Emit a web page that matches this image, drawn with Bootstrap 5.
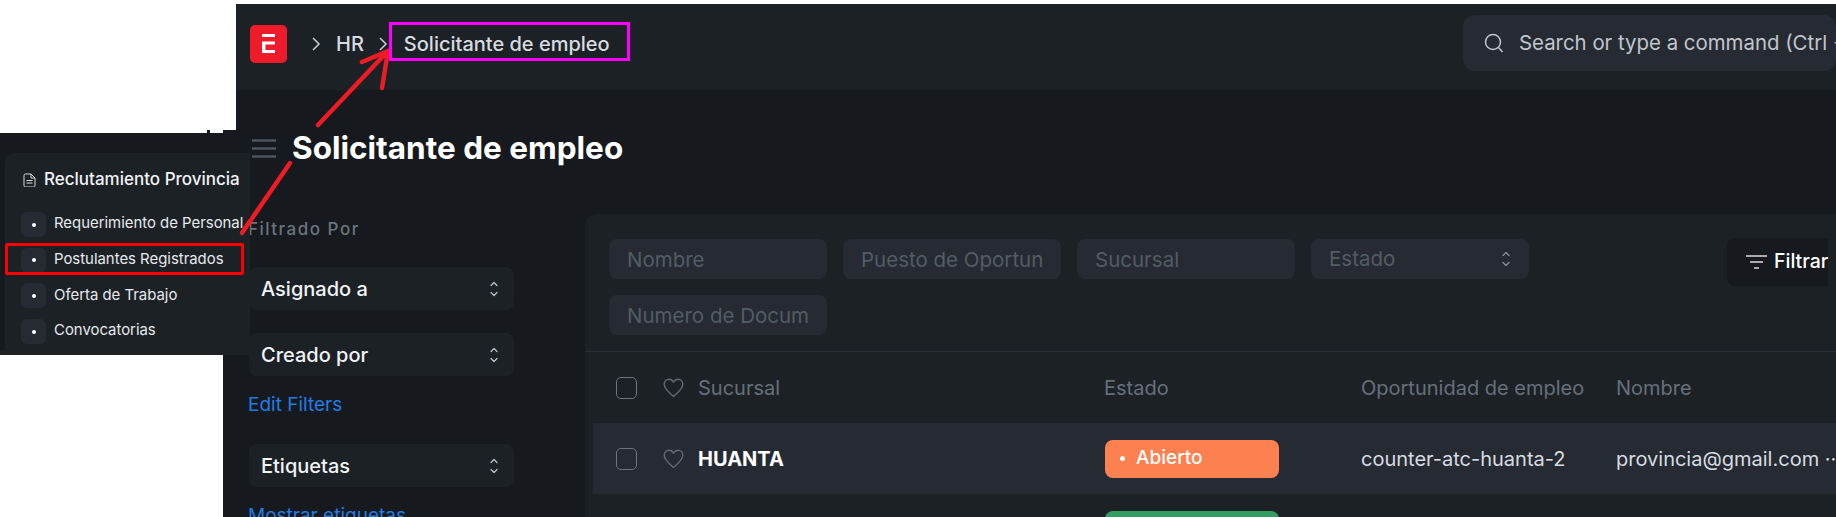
<!DOCTYPE html>
<html lang="en">
<head>
<meta charset="UTF-8">
<title>Solicitante de empleo</title>
<link href="https://cdn.jsdelivr.net/npm/bootstrap@5.3.0/dist/css/bootstrap.min.css" rel="stylesheet">
<style>
    html, body { height: 100%; }
    body {
        background: #fff;
        font-family: Inter, "Liberation Sans", sans-serif;
        overflow: hidden;
    }
    /* main screenshot */
    .app-window {
        position: absolute;
        left: 223px; top: 4px; right: 0; bottom: 0;
        background: #16191d;
        color: #fff;
        overflow: hidden;
        clip-path: polygon(13px 0, 100% 0, 100% 100%, 0 100%, 0 126px, 13px 126px);
    }
    .app-header { height: 86px; background: #1c2126; padding: 0 0 6px 27px; }
    .app-logo { width: 37px; height: 38px; flex: none; }
    .crumb { font-size: 20px; font-weight: 500; color: #d8dce0; line-height: 24px; }
    .crumb-first { margin-left: 24px; }
    .crumb-hr { margin: 0 14px 0 15px; }
    .crumb-current { margin-left: 16px; }
    .app-search {
        width: 373px; height: 56px; margin-top: -2px; flex: none;
        background: #252a33; border-radius: 12px;
        padding-left: 21px; gap: 15px;
        font-size: 20.4px; color: #c0c6cc; white-space: nowrap; overflow: hidden;
    }
    .app-title-row { height: 116px; padding-left: 29px; gap: 16px; }
    .app-title { font-size: 31.5px; font-weight: 700; margin: 0; line-height: 44px; }
    .app-body { gap: 71px; padding-left: 26px; }
    .filter-side { width: 265px; flex: none; }
    .filter-head { font-size: 17px; font-weight: 500; color: #6b747d; letter-spacing: 1.5px; line-height: 24px; margin: 11px 0 26px -1px; }
    .side-select {
        height: 43px; background: #1c2126; border-radius: 8px;
        padding: 0 15px 0 12px; font-size: 20px; font-weight: 500; color: #f1f3f5;
    }
    .side-select svg { color: #c0c6cc; }
    .filter-select svg { color: #8a929a; }
    .side-link { font-size: 19px; color: #1f7de6; line-height: 24px; text-decoration: none; display: block; margin-left: -1px; }
    .gap-a { margin-top: 23px; }
    .gap-b { margin-top: 17px; }
    .gap-c { margin-top: 27px; }
    .list-card { flex: 1; background: #1c2126; border-radius: 12px 0 0 0; min-width: 0; height: 320px; margin-top: 8px; }
    .filter-row { padding: 25px 0 0 24px; border-bottom: 1px solid #2a2f35; height: 138px; align-items: flex-start; }
    .filter-wrap { width: 940px; flex: none; gap: 16px; }
    .filter-input.form-control {
        width: 218px; height: 40px; flex: none;
        background-color: #252a33; border: 0; border-radius: 8px;
        padding: 0 18px; font-size: 20.5px; color: #535c65; box-shadow: none;
    }
    .filter-input::placeholder { color: #535c65; opacity: 1; }
    .filter-input.filter-select { padding-right: 18px; }
    .filter-btn {
        height: 48px; margin-left: 178px; margin-top: -1px; flex: none;
        background: #16191d; color: #fff; border: 0; border-radius: 8px 0 0 8px;
        padding: 0 0 0 19px; gap: 7px; font-size: 19.5px; font-weight: 500;
    }
    .list-grid {
        display: grid;
        grid-template-columns: 511px 257px 255px 1fr;
        align-items: center;
        margin-left: 8px;
        height: 71px;
    }
    .list-head { color: #66707a; font-size: 20px; }
    .list-item { background: #252a33; color: #d8dce0; font-size: 20px; white-space: nowrap; overflow: hidden; }
    .first-cell { padding-left: 23px; gap: 26px; }
    .check-box { width: 21px; height: 22px; border: 1.5px solid #6b747d; border-radius: 5px; flex: none; }
    .first-name { margin-left: -12px; }
    .item-name { font-weight: 700; color: #fff; }
    .state-pill {
        width: 174px; height: 38px; border-radius: 8px; margin-left: 1px;
        font-size: 19px; font-weight: 500; color: #fff; padding-left: 15px; gap: 11px;
    }
    .pill-open { background: #fd8050; }
    .pill-ok { background: #2f9e5f; }
    .pill-dot { width: 5px; height: 5px; border-radius: 50%; background: #fff; flex: none; }
    .next-row { align-self: start; padding-top: 17px; }
    /* pasted menu panel */
    .menu-shot {
        position: absolute; left: 0; top: 133px; width: 250px; height: 222px;
        background: linear-gradient(#16191d 217px, #1c2126 217px);
        padding: 20px 0 5px 5px; color: #f1f3f5;
    }
    .menu-card { height: 100%; background: #1c2126; border-radius: 10px 0 0 0; padding: 20px 0 0 18px; }
    .menu-title { font-size: 17px; font-weight: 500; gap: 8px; height: 13px; margin-bottom: 26px; white-space: nowrap; }
    .menu-item { height: 25px; gap: 8px; margin-bottom: 10.7px; font-size: 14.9px; white-space: nowrap; color: #e6e9ec; margin-left: -2px; }
    .menu-item span:last-child { margin-top: -2px; }
    .menu-bullet { width: 25px; height: 25px; background: #252a33; border-radius: 6px; flex: none; }
    .menu-bullet i { width: 4px; height: 4px; border-radius: 50%; background: #fff; display: block; }
    /* annotations drawn on top */
    .mark-red { position: absolute; left: 5px; top: 243px; width: 239px; height: 32px; border: 3px solid #f00; border-radius: 2px; }
    .mark-pink { position: absolute; left: 389px; top: 22px; width: 241px; height: 39px; border: 3px solid #f0f; }
    .mark-arrow { position: absolute; left: 0; top: 0; width: 1836px; height: 517px; pointer-events: none; }
    .speck { position: absolute; left: 207px; width: 3px; top: 130px; height: 3px; background: #16191d; }
</style>
</head>
<body>
    <svg width="0" height="0" class="position-absolute">
        <symbol id="updown" viewBox="0 0 10 18">
            <path d="M2 5.500l3-3 3 3M2 12.500l3 3 3-3" fill="none" stroke="currentColor" stroke-width="1.200" stroke-linecap="round" stroke-linejoin="round"/>
        </symbol>
        <symbol id="heart" viewBox="0 0 21 20">
            <path d="M10.500 18.500C6 14.500 1.200 11 1.200 6.300 1.200 3.200 3.500 1.200 6 1.200c2 0 3.500 1 4.500 3 1-2 2.500-3 4.500-3 2.500 0 4.800 2 4.800 5.100 0 4.700-4.800 8.200-9.300 12.200z" fill="none" stroke="#5f6972" stroke-width="1.400" stroke-linejoin="round"/>
        </symbol>
    </svg>

    <div class="app-window">
        <header class="app-header d-flex align-items-center">
            <svg class="app-logo" viewBox="0 0 37 38">
                <rect width="37" height="38" rx="5" fill="#ee1c2b"/>
                <path d="M12 9h13v3H12zM12 16.500h13v3H15.500v5.500H25v3H12z" fill="#fff"/>
            </svg>
            <svg class="crumb-first" width="10" height="18" viewBox="0 0 10 18"><path d="M2 3l6 6-6 6" fill="none" stroke="#c9ced3" stroke-width="1.500"/></svg>
            <span class="crumb crumb-hr">HR</span>
            <svg width="10" height="18" viewBox="0 0 10 18"><path d="M2 3l6 6-6 6" fill="none" stroke="#c9ced3" stroke-width="1.500"/></svg>
            <span class="crumb crumb-current">Solicitante de empleo</span>
            <div class="app-search d-flex align-items-center ms-auto">
                <svg width="20" height="20" viewBox="0 0 20 20" class="flex-shrink-0"><circle cx="9" cy="9" r="7.500" fill="none" stroke="#c0c6cc" stroke-width="1.500"/><path d="M14.500 14.500l4 4.500" stroke="#c0c6cc" stroke-width="1.500"/></svg>
                <span>Search or type a command (Ctrl + G)</span>
            </div>
        </header>

        <div class="app-title-row d-flex align-items-center">
            <svg width="24" height="19" viewBox="0 0 24 19"><path d="M0 1.500h24M0 9.500h24M0 17.500h24" stroke="#4c545c" stroke-width="2.500"/></svg>
            <h1 class="app-title">Solicitante de empleo</h1>
        </div>

        <div class="app-body d-flex">
            <aside class="filter-side">
                <div class="filter-head">Filtrado Por</div>
                <div class="side-select d-flex align-items-center justify-content-between">Asignado a <svg width="10" height="18"><use href="#updown"/></svg></div>
                <div class="side-select d-flex align-items-center justify-content-between gap-a">Creado por <svg width="10" height="18"><use href="#updown"/></svg></div>
                <div class="gap-b"><a href="#" class="side-link">Edit Filters</a></div>
                <div class="side-select d-flex align-items-center justify-content-between gap-c">Etiquetas <svg width="10" height="18"><use href="#updown"/></svg></div>
                <div class="gap-b"><a href="#" class="side-link">Mostrar etiquetas</a></div>
            </aside>

            <main class="list-card">
                <div class="filter-row d-flex">
                    <div class="filter-wrap d-flex flex-wrap">
                        <input class="filter-input form-control" placeholder="Nombre">
                        <input class="filter-input form-control" placeholder="Puesto de Oportunidad">
                        <input class="filter-input form-control" placeholder="Sucursal">
                        <div class="filter-input form-control d-flex align-items-center justify-content-between filter-select">Estado <svg width="10" height="18"><use href="#updown"/></svg></div>
                        <input class="filter-input form-control" placeholder="Numero de Documento">
                    </div>
                    <button class="filter-btn d-flex align-items-center">
                        <svg width="21" height="16" viewBox="0 0 21 16"><path d="M0 2h21M4 8h13M8 14h5" stroke="#d8dce0" stroke-width="1.500"/></svg>
                        Filtrar
                    </button>
                </div>
                <div class="list-grid list-head">
                    <div class="first-cell d-flex align-items-center"><span class="check-box"></span><svg width="21" height="20"><use href="#heart"/></svg><span class="first-name">Sucursal</span></div>
                    <div>Estado</div>
                    <div>Oportunidad de empleo</div>
                    <div>Nombre</div>
                </div>
                <div class="list-grid list-item">
                    <div class="first-cell d-flex align-items-center"><span class="check-box"></span><svg width="21" height="20"><use href="#heart"/></svg><span class="first-name item-name">HUANTA</span></div>
                    <div><span class="state-pill pill-open d-flex align-items-center"><span class="pill-dot"></span>Abierto</span></div>
                    <div>counter-atc-huanta-2</div>
                    <div>provincia@gmail.com ···</div>
                </div>
                <div class="list-grid">
                    <div></div>
                    <div class="next-row"><span class="state-pill pill-ok d-flex align-items-center"></span></div>
                </div>
            </main>
        </div>
    </div>

    <svg class="mark-arrow" viewBox="0 0 1836 517">
        <path d="M242 233L290 163M318 125L388 51M362 62L388 51L382 88" fill="none" stroke="#ed1c24" stroke-width="4.500" stroke-linecap="round" stroke-linejoin="round"/>
    </svg>
    <div class="mark-pink"></div>
    <div class="speck"></div>

    <div class="menu-shot">
        <div class="menu-card">
            <div class="menu-title d-flex align-items-center">
                <svg width="13" height="14" viewBox="0 0 13 14" class="flex-shrink-0"><path d="M1 2.500A1.500 1.500 0 0 1 2.500 1H8l4 4v7.500a1.500 1.500 0 0 1-1.500 1.500h-8A1.500 1.500 0 0 1 1 12.500zM8 1v4h4M3.500 7.500h6M3.500 10h6" fill="none" stroke="#d8dce0" stroke-width="1"/></svg>
                Reclutamiento Provincia
            </div>
            <div class="menu-item d-flex align-items-center"><span class="menu-bullet d-flex align-items-center justify-content-center"><i></i></span><span>Requerimiento de Personal</span></div>
            <div class="menu-item d-flex align-items-center"><span class="menu-bullet d-flex align-items-center justify-content-center"><i></i></span><span>Postulantes Registrados</span></div>
            <div class="menu-item d-flex align-items-center"><span class="menu-bullet d-flex align-items-center justify-content-center"><i></i></span><span>Oferta de Trabajo</span></div>
            <div class="menu-item d-flex align-items-center"><span class="menu-bullet d-flex align-items-center justify-content-center"><i></i></span><span>Convocatorias</span></div>
        </div>
    </div>
    <div class="mark-red"></div>
    <svg class="mark-arrow" viewBox="0 0 1836 517">
        <path d="M242 233L250 221" fill="none" stroke="#ed1c24" stroke-width="4.500" stroke-linecap="round"/>
    </svg>
</body>
</html>
